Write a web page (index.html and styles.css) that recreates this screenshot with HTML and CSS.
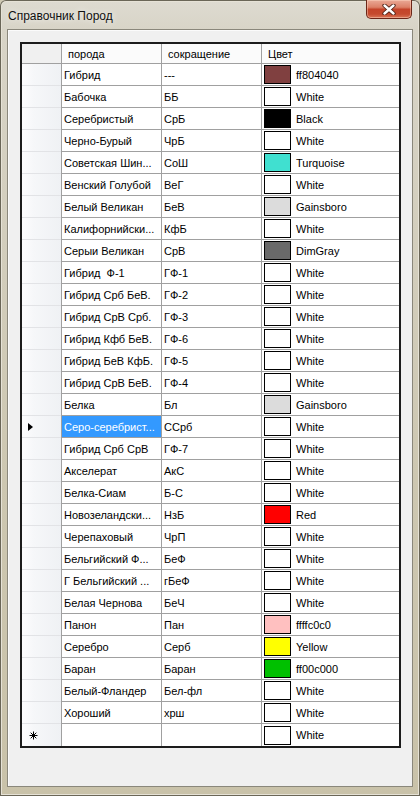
FILE: index.html
```html
<!DOCTYPE html>
<html lang="ru">
<head>
<meta charset="utf-8">
<title>Справочник Пород</title>
<link rel="stylesheet" href="styles.css">
</head>
<body>
<div class="window">
  <div class="titlebar">
    <span class="title">Справочник Пород</span>
    <div class="close">
      <svg width="14" height="11" viewBox="0 0 14 11">
        <path d="M2.5 1.5 L11.5 9.5 M11.5 1.5 L2.5 9.5" stroke="#4a1f14" stroke-width="4.2" stroke-linecap="round"/>
        <path d="M2.5 1.5 L11.5 9.5 M11.5 1.5 L2.5 9.5" stroke="#ffffff" stroke-width="2.4" stroke-linecap="round"/>
      </svg>
    </div>
  </div>
  <div class="client">
    <div class="grid">
      <div class="row head">
        <div class="rh hc"></div>
        <div class="c h">порода</div>
        <div class="c h">сокращение</div>
        <div class="c h">Цвет</div>
      </div>
      <div class="row"><div class="rh"></div><div class="c">Гибрид</div><div class="c">---</div><div class="c"><span class="sw sw-maroon"></span><span class="ct">ff804040</span></div></div>
      <div class="row"><div class="rh"></div><div class="c">Бабочка</div><div class="c">ББ</div><div class="c"><span class="sw"></span><span class="ct">White</span></div></div>
      <div class="row"><div class="rh"></div><div class="c">Серебристый</div><div class="c">СрБ</div><div class="c"><span class="sw sw-black"></span><span class="ct">Black</span></div></div>
      <div class="row"><div class="rh"></div><div class="c">Черно-Бурый</div><div class="c">ЧрБ</div><div class="c"><span class="sw"></span><span class="ct">White</span></div></div>
      <div class="row"><div class="rh"></div><div class="c">Советская Шин...</div><div class="c">СоШ</div><div class="c"><span class="sw sw-turq"></span><span class="ct">Turquoise</span></div></div>
      <div class="row"><div class="rh"></div><div class="c">Венский Голубой</div><div class="c">ВеГ</div><div class="c"><span class="sw"></span><span class="ct">White</span></div></div>
      <div class="row"><div class="rh"></div><div class="c">Белый Великан</div><div class="c">БеВ</div><div class="c"><span class="sw sw-gains"></span><span class="ct">Gainsboro</span></div></div>
      <div class="row"><div class="rh"></div><div class="c">Калифорнийски...</div><div class="c">КфБ</div><div class="c"><span class="sw"></span><span class="ct">White</span></div></div>
      <div class="row"><div class="rh"></div><div class="c">Серыи Великан</div><div class="c">СрВ</div><div class="c"><span class="sw sw-dim"></span><span class="ct">DimGray</span></div></div>
      <div class="row"><div class="rh"></div><div class="c">Гибрид  Ф-1</div><div class="c">ГФ-1</div><div class="c"><span class="sw"></span><span class="ct">White</span></div></div>
      <div class="row"><div class="rh"></div><div class="c">Гибрид Срб БеВ.</div><div class="c">ГФ-2</div><div class="c"><span class="sw"></span><span class="ct">White</span></div></div>
      <div class="row"><div class="rh"></div><div class="c">Гибрид СрВ Срб.</div><div class="c">ГФ-3</div><div class="c"><span class="sw"></span><span class="ct">White</span></div></div>
      <div class="row"><div class="rh"></div><div class="c">Гибрид Кфб БеВ.</div><div class="c">ГФ-6</div><div class="c"><span class="sw"></span><span class="ct">White</span></div></div>
      <div class="row"><div class="rh"></div><div class="c">Гибрид БеВ КфБ.</div><div class="c">ГФ-5</div><div class="c"><span class="sw"></span><span class="ct">White</span></div></div>
      <div class="row"><div class="rh"></div><div class="c">Гибрид СрВ БеВ.</div><div class="c">ГФ-4</div><div class="c"><span class="sw"></span><span class="ct">White</span></div></div>
      <div class="row"><div class="rh"></div><div class="c">Белка</div><div class="c">Бл</div><div class="c"><span class="sw sw-gains"></span><span class="ct">Gainsboro</span></div></div>
      <div class="row"><div class="rh"><span class="cur"></span></div><div class="c sel">Серо-серебрист...</div><div class="c">ССрб</div><div class="c"><span class="sw"></span><span class="ct">White</span></div></div>
      <div class="row"><div class="rh"></div><div class="c">Гибрид Срб СрВ</div><div class="c">ГФ-7</div><div class="c"><span class="sw"></span><span class="ct">White</span></div></div>
      <div class="row"><div class="rh"></div><div class="c">Акселерат</div><div class="c">АкС</div><div class="c"><span class="sw"></span><span class="ct">White</span></div></div>
      <div class="row"><div class="rh"></div><div class="c">Белка-Сиам</div><div class="c">Б-С</div><div class="c"><span class="sw"></span><span class="ct">White</span></div></div>
      <div class="row"><div class="rh"></div><div class="c">Новозеландски...</div><div class="c">НзБ</div><div class="c"><span class="sw sw-red"></span><span class="ct">Red</span></div></div>
      <div class="row"><div class="rh"></div><div class="c">Черепаховый</div><div class="c">ЧрП</div><div class="c"><span class="sw"></span><span class="ct">White</span></div></div>
      <div class="row"><div class="rh"></div><div class="c">Бельгийский Ф...</div><div class="c">БеФ</div><div class="c"><span class="sw"></span><span class="ct">White</span></div></div>
      <div class="row"><div class="rh"></div><div class="c">Г Бельгийский ...</div><div class="c">гБеФ</div><div class="c"><span class="sw"></span><span class="ct">White</span></div></div>
      <div class="row"><div class="rh"></div><div class="c">Белая Чернова</div><div class="c">БеЧ</div><div class="c"><span class="sw"></span><span class="ct">White</span></div></div>
      <div class="row"><div class="rh"></div><div class="c">Панон</div><div class="c">Пан</div><div class="c"><span class="sw sw-pink"></span><span class="ct">ffffc0c0</span></div></div>
      <div class="row"><div class="rh"></div><div class="c">Серебро</div><div class="c">Серб</div><div class="c"><span class="sw sw-yellow"></span><span class="ct">Yellow</span></div></div>
      <div class="row"><div class="rh"></div><div class="c">Баран</div><div class="c">Баран</div><div class="c"><span class="sw sw-green"></span><span class="ct">ff00c000</span></div></div>
      <div class="row"><div class="rh"></div><div class="c">Белый-Фландер</div><div class="c">Бел-фл</div><div class="c"><span class="sw"></span><span class="ct">White</span></div></div>
      <div class="row"><div class="rh"></div><div class="c">Хороший</div><div class="c">хрш</div><div class="c"><span class="sw"></span><span class="ct">White</span></div></div>
      <div class="row last"><div class="rh"><svg class="star" width="9" height="9" viewBox="0 0 9 9"><path d="M4.5 0.5 V8.5 M0.5 4.5 H8.5 M1.7 1.7 L7.3 7.3 M7.3 1.7 L1.7 7.3" stroke="#000" stroke-width="1"/></svg></div><div class="c"></div><div class="c"></div><div class="c"><span class="sw"></span><span class="ct">White</span></div></div>
    </div>
  </div>
</div>
</body>
</html>
```
FILE: styles.css
```css
html, body {
  margin: 0;
  padding: 0;
}
body {
  font-family: "Liberation Sans", Arial, sans-serif;
  font-size: 11px;
  color: #000;
  background: #cfc9b3;
}
.window {
  width: 420px;
  height: 796px;
  box-sizing: border-box;
  display: flex;
  flex-direction: column;
  background: linear-gradient(to bottom, #dedbd1 0, #d8d4c7 30px, #cdc7b1 60%, #c9c2a9 100%);
  box-shadow: inset 0 0 0 1px #6a6657, inset 0 0 0 2px #e6e2d6;
  border-radius: 6px 6px 0 0;
}
.titlebar {
  height: 29px;
  display: flex;
  align-items: flex-start;
  flex-shrink: 0;
}
.title {
  font-size: 12px;
  padding-left: 8px;
  padding-top: 9px;
  line-height: 14px;
  color: #111;
  text-shadow: 0 0 6px rgba(255, 255, 255, 0.9);
}
.close {
  margin-left: auto;
  margin-right: 8px;
  width: 46px;
  height: 19px;
  box-sizing: border-box;
  border: 1px solid #6b2618;
  border-top: none;
  border-radius: 0 0 5px 5px;
  background: linear-gradient(to bottom, #eaa996 0%, #dc8168 40%, #c4442a 52%, #c54a2e 78%, #d97456 100%);
  box-shadow: inset 0 0 0 1px rgba(255, 220, 200, 0.45);
  display: flex;
  align-items: center;
  justify-content: center;
}
.client {
  flex: 1;
  margin: 0 7px 9px 7px;
  border: 1px solid #8a877b;
  background: #f0f0f0;
  box-shadow: inset 1px 1px 0 #fbfbfb;
  padding: 12px 0 0 12px;
}
.grid {
  width: 381px;
  box-sizing: border-box;
  border: 2px solid #1c1c1c;
  border-right-width: 2px;
  background: #fff;
}
.row {
  display: grid;
  grid-template-columns: 39px 100px 100px 138px;
  height: 22px;
}
.row > div {
  border-bottom: 1px solid #a0a0a0;
  min-width: 0;
  overflow: hidden;
  white-space: pre;
}
.row.last > div {
  border-bottom: none;
}
.row.head {
  height: 20px;
}
.rh {
  background: linear-gradient(to right, #fdfdfe 0, #f6f7f9 30%, #eff1f4 100%);
  display: flex;
  align-items: center;
  padding-left: 6px;
}
.row > .rh {
  border-bottom-color: #e2e3e6;
}
.row.head > .rh {
  background: #f0f0f0;
  border-bottom-color: #a0a0a0;
}
.c {
  border-left: 1px solid #a0a0a0;
  display: flex;
  align-items: center;
  padding-left: 2px;
}
.c.h {
  background: #fbfbfb;
  padding-left: 6px;
}
.c.sel {
  background: #3399ff;
  color: #fff;
}
.sw {
  display: block;
  width: 27px;
  height: 19px;
  box-sizing: border-box;
  border: 1px solid #000;
  background: #fff;
  flex-shrink: 0;
}
.ct {
  margin-left: 5px;
}
.sw-maroon { background: #804040; }
.sw-black { background: #000; }
.sw-turq { background: #40e0d0; }
.sw-gains { background: #dcdcdc; }
.sw-dim { background: #696969; }
.sw-red { background: #ff0000; }
.sw-pink { background: #ffc0c0; }
.sw-yellow { background: #ffff00; }
.sw-green { background: #00c000; }
.cur {
  width: 0;
  height: 0;
  border-left: 5px solid #000;
  border-top: 4px solid transparent;
  border-bottom: 4px solid transparent;
}
.star {
  display: block;
  margin-left: 1px;
}
```
